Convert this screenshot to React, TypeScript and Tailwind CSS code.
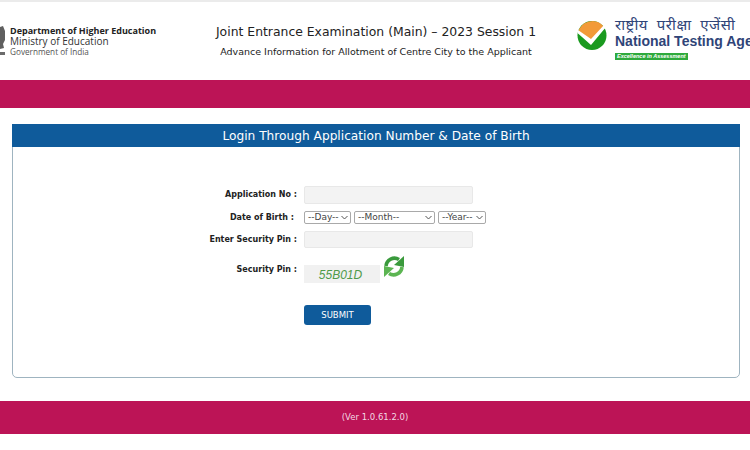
const sans = "font-['DejaVu_Sans',sans-serif]";

function Emblem() {
  return (
    <svg width="6" height="30" viewBox="0 0 6 30" className="shrink-0">
      <path d="M0 1 L3 0 L5 5 L5 14 L3 18 L4 22 L0 23 Z" fill="#5f5f5f" />
      <path d="M0 26 H5 V29 H0 Z" fill="#6b6b6b" />
    </svg>
  );
}

function NtaLogo() {
  return (
    <svg width="30" height="31" viewBox="0 0 30 31" className="shrink-0 mb-[6px]">
      <circle cx="15" cy="15.5" r="14.5" fill="#1a9a1f" />
      <path d="M1 13 A14.5 14.5 0 0 1 27 7 L14 20 Z" fill="#f29a38" />
      <path d="M0.5 13 L14 25 L29 7 L27 5 L14 19 L1 10 Z" fill="#fff" />
    </svg>
  );
}

function RefreshIcon() {
  return (
    <svg width="22" height="23" viewBox="0 0 22 23" className="shrink-0">
      <path d="M3 11 A8.5 8.5 0 0 1 16 4.5" fill="none" stroke="#3a9a3c" strokeWidth="3.6" />
      <path d="M21 1 L21 12 L11 10 Z" fill="#3a9a3c" />
      <path d="M19 12 A8.5 8.5 0 0 1 6 18.5" fill="none" stroke="#5cb552" strokeWidth="3.6" />
      <path d="M1 22 L1 11 L11 13 Z" fill="#5cb552" />
    </svg>
  );
}

function Chevron() {
  return (
    <svg width="7" height="5" viewBox="0 0 7 5" className="shrink-0">
      <path d="M0.5 1 L3.5 4 L6.5 1" fill="none" stroke="#555" strokeWidth="1" />
    </svg>
  );
}

function FakeSelect({ label, width }: { label: string; width: string }) {
  return (
    <div className={`${width} h-[13px] flex items-center justify-between pl-[3px] pr-[2px] border border-[#a9a9a9] rounded-[2px] bg-white text-[9px] text-[#444]`}>
      <span>{label}</span>
      <Chevron />
    </div>
  );
}

function Label({ text, pr }: { text: string; pr: string }) {
  return <div className={`w-[304px] shrink-0 ${pr} text-right text-[8px] font-bold text-[#222]`}>{text}</div>;
}

export default function App() {
  return (
    <div className={`${sans} w-[750px] h-[450px] overflow-hidden bg-white flex flex-col`}>
      {/* Header */}
      <header className="h-[80px] shrink-0 flex items-center border-t-2 border-[#ebebeb]">
        <div className="w-[216px] shrink-0 flex items-center gap-[4px]">
          <Emblem />
          <div className="flex flex-col text-[#222] font-['Open_Sans',sans-serif]">
            <span className="text-[9px] leading-[11px] font-bold whitespace-nowrap">Department of Higher Education</span>
            <span className="text-[10px] leading-[11px] text-[#333]">Ministry of Education</span>
            <span className="text-[8.2px] leading-[10px] text-[#555]">Government of India</span>
          </div>
        </div>
        <div className="w-[320px] shrink-0 flex flex-col items-center gap-[6px] text-[#222]">
          <span className="text-[12.4px] leading-[16px] whitespace-nowrap">Joint Entrance Examination (Main) – 2023 Session 1</span>
          <span className="text-[9.5px] leading-[12px] whitespace-nowrap">Advance Information for Allotment of Centre City to the Applicant</span>
        </div>
        <div className="ml-[41px] flex items-center gap-[8px] mb-[6px]">
          <NtaLogo />
          <div className="flex flex-col items-start">
            <span className="text-[15px] leading-[17px] tracking-[0.6px] [word-spacing:4px] text-[#2f4478] font-['Noto_Sans',sans-serif] whitespace-nowrap">राष्ट्रीय परीक्षा एजेंसी</span>
            <span className="text-[14px] leading-[17px] font-bold text-[#2f4478] font-['Liberation_Sans',sans-serif] whitespace-nowrap">National Testing Agency</span>
            <span className="mt-[3px] h-[7px] px-[2px] bg-[#2eaa3c] text-white text-[5.5px] leading-[7px] italic font-bold font-['Liberation_Sans',sans-serif]">Excellence in Assessment</span>
          </div>
        </div>
      </header>

      <div className="h-[28px] shrink-0 bg-[#bc1456]" />

      {/* Login panel */}
      <main className="mt-[16px] mx-[12px] w-[728px] h-[254px] shrink-0 border border-[#9fb4c0] rounded-b-[5px] flex flex-col">
        <div className="h-[23px] -mx-px -mt-px pt-[1px] bg-[#0f5b9b] flex items-center justify-center text-white text-[12.2px]">
          Login Through Application Number &amp; Date of Birth
        </div>

        <div className="flex flex-col pt-[39px]">
          <div className="flex items-center h-[18px] -ml-[13px]">
            <Label text="Application No :" pr="pr-[7px]" />
            <div className="w-[169px] h-[18px] bg-[#f3f3f3] rounded-[2px] border border-[#e8e8e8]" />
          </div>
          <div className="flex items-center h-[13px] mt-[7px] -ml-[13px]">
            <Label text="Date of Birth :" pr="pr-[10px]" />
            <div className="flex gap-[3px]">
              <FakeSelect label="--Day--" width="w-[47px]" />
              <FakeSelect label="--Month--" width="w-[81px]" />
              <FakeSelect label="--Year--" width="w-[48px]" />
            </div>
          </div>
          <div className="flex items-center h-[17px] mt-[7px] -ml-[13px]">
            <Label text="Enter Security Pin :" pr="pr-[7px]" />
            <div className="w-[169px] h-[17px] bg-[#f3f3f3] rounded-[2px] border border-[#e8e8e8]" />
          </div>
          <div className="flex items-start mt-[7px] -ml-[13px]">
            <div className="mt-[9px]"><Label text="Security Pin :" pr="pr-[7px]" /></div>
            <div className="mt-[10px] w-[76px] h-[18px] pt-[1px] pr-[3px] bg-[#f1f1f1] flex items-center justify-center italic text-[12px] font-['Liberation_Sans',sans-serif] text-[#4f9a4a]">55B01D</div>
            <div className="ml-[3px]"><RefreshIcon /></div>
          </div>
          <div className="mt-[22px] ml-[291px]">
            <button className="w-[67px] h-[20px] bg-[#0f5b9b] rounded-[3px] text-white text-[8.5px] flex items-center justify-center">SUBMIT</button>
          </div>
        </div>
      </main>

      {/* Footer */}
      <footer className="mt-[23px] h-[33px] shrink-0 bg-[#bc1456] flex items-center justify-center text-[8.5px] text-[#f3d9e3]">
        (Ver 1.0.61.2.0)
      </footer>
    </div>
  );
}
